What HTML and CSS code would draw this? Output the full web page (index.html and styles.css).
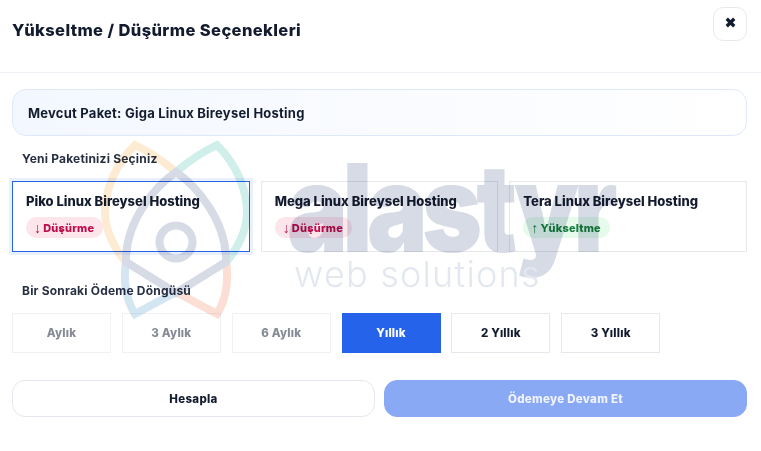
FILE: index.html
```html
<!DOCTYPE html>
<html lang="tr">
<head>
<meta charset="utf-8">
<title>Yükseltme / Düşürme Seçenekleri</title>
<link rel="stylesheet" href="styles.css">
</head>
<body>
<div class="modal">
  <header class="modal-head">
    <h1 class="modal-title">Yükseltme / Düşürme Seçenekleri</h1>
    <button class="close-btn" aria-label="Kapat">
      <svg class="close-icon" viewBox="0 0 10 10"><path d="M1.6 1.6 8.4 8.4M8.4 1.6 1.6 8.4"/></svg>
    </button>
  </header>
  <main class="modal-body">
    <div class="current">Mevcut Paket: Giga Linux Bireysel Hosting</div>
    <div class="label label-new">Yeni Paketinizi Seçiniz</div>
    <div class="plans">
      <div class="plan plan-selected">
        <div class="plan-name">Piko Linux Bireysel Hosting</div>
        <span class="pill pill-down"><span class="arrow">↓</span>Düşürme</span>
      </div>
      <div class="plan">
        <div class="plan-name">Mega Linux Bireysel Hosting</div>
        <span class="pill pill-down"><span class="arrow">↓</span>Düşürme</span>
      </div>
      <div class="plan">
        <div class="plan-name">Tera Linux Bireysel Hosting</div>
        <span class="pill pill-up"><span class="arrow">↑</span>Yükseltme</span>
      </div>
    </div>
    <div class="label label-cycle">Bir Sonraki Ödeme Döngüsü</div>
    <div class="cycles">
      <div class="cycle cycle-off">Aylık</div>
      <div class="cycle cycle-off">3 Aylık</div>
      <div class="cycle cycle-off">6 Aylık</div>
      <div class="cycle cycle-on">Yıllık</div>
      <div class="cycle">2 Yıllık</div>
      <div class="cycle">3 Yıllık</div>
    </div>
    <div class="actions">
      <button class="action action-ghost">Hesapla</button>
      <button class="action action-primary">Ödemeye Devam Et</button>
    </div>
  </main>
  <div class="watermark" aria-hidden="true">
    <svg class="wm-logo" viewBox="0 0 160 200">
      <g class="wm-stroke">
        <path class="wm-orange" d="M86 42C72 30 60 22 45 15 25 35 15 60 15 83 15 100 25 120 36 132"/>
        <path class="wm-teal" d="M86 42C100 30 112 22 127 15 147 35 157 60 157 83 157 100 147 120 136 132"/>
        <path class="wm-blue" d="M36 132C33 150 36 170 45 184L86 162"/>
        <path class="wm-red" d="M136 132C139 150 136 170 127 184L86 162"/>
        <path class="wm-grey" d="M86 42C105 55 137 90 136 132L86 163 36 132C35 90 67 55 86 42Z"/>
        <circle class="wm-grey" cx="86" cy="112" r="16.5"/>
      </g>
    </svg>
    <div class="wm-brand">alastyr</div>
    <div class="wm-sub">web solutions</div>
  </div>
</div>
</body>
</html>
```
FILE: styles.css
```css
* { box-sizing: border-box; }
html, body { margin: 0; padding: 0; background: #fff; }
body { font-family: Inter, "Noto Sans", sans-serif; color: #131b2e; }
button { font-family: inherit; }

.modal { position: relative; width: 761px; height: 451px; overflow: hidden; background: #fff; }

.modal-head {
  height: 73px;
  padding: 7px 14px 0 12px;
  display: flex;
  justify-content: space-between;
  align-items: flex-start;
  border-bottom: 1px solid #eef0f5;
}
.modal-title { margin: 12px 0 0; font-size: 16.5px; line-height: 22px; font-weight: 800; letter-spacing: .4px; }
.close-btn {
  width: 34px; height: 34px; padding: 0;
  display: flex; align-items: center; justify-content: center;
  background: #fff; border: 1px solid #e7e9ee; border-radius: 10px;
}
.close-icon { width: 11px; height: 11px; margin-top: -4px; fill: none; stroke: #131b2e; stroke-width: 3; }

.modal-body { padding: 16px 14px 0 12px; }

.current {
  height: 47px;
  padding: 0 15px;
  display: flex; align-items: center;
  font-size: 13px; font-weight: 700; letter-spacing: .23px;
  border: 1px solid #dfe8fb; border-radius: 14px;
  background: linear-gradient(90deg, #f3f7ff, #ffffff);
}

.label { padding-left: 10px; font-size: 12px; line-height: 16px; font-weight: 700; color: #273042; letter-spacing: .2px; }
.label-new { margin-top: 15px; }
.label-cycle { margin-top: 31px; }

.plans { margin-top: 14px; display: grid; grid-template-columns: repeat(3, 1fr); gap: 11px; }
.plan { height: 71px; padding: 10px 13px 0; border: 1px solid #e6e8ee; background: #fff; }
.plan-selected { border-color: #2563eb; box-shadow: 0 0 0 3px #ebf0fd; }
.plan-name { font-size: 13px; line-height: 18px; font-weight: 800; letter-spacing: 0; }
.pill {
  display: inline-flex; align-items: center;
  height: 21px; margin-top: 7px; padding: 0 9px 0 8px;
  border-radius: 11px;
  font-size: 11px; font-weight: 800; letter-spacing: .2px;
}
.arrow { font-family: "Liberation Sans", sans-serif; font-size: 14px; font-weight: 400; margin-right: 2px; }
.pill-down { background: #fde5ec; color: #be0b4a; }
.pill-up { background: #e6fbec; color: #15803d; }

.cycles { margin-top: 14px; display: flex; gap: 10.85px; }
.cycle {
  width: 99px; height: 40px;
  display: flex; align-items: center; justify-content: center;
  font-size: 11.5px; font-weight: 800; letter-spacing: .2px;
  border: 1px solid #e6e8ee; background: #fff;
}
.cycle-off { color: #878b96; border-color: #f0f1f5; }
.cycle-on { color: #fff; background: #2563eb; border-color: #2563eb; }

.actions { margin-top: 27px; display: flex; gap: 9px; }
.action {
  flex: 1; height: 37px; padding: 0;
  font-size: 11.5px; font-weight: 800; letter-spacing: .3px;
  border-radius: 13px;
}
.action-ghost { background: #fff; border: 1px solid #e5e7ee; color: #131b2e; }
.action-primary { background: #8aa9f4; border: 1px solid #8aa9f4; color: #eef3fe; }

.watermark { position: absolute; inset: 0; pointer-events: none; mix-blend-mode: multiply; }
.wm-logo { position: absolute; left: 90px; top: 130px; width: 160px; height: 200px; }
.wm-stroke { fill: none; stroke-width: 8; }
.wm-orange { stroke: #fdebd3; }
.wm-teal { stroke: #d0eeea; }
.wm-blue { stroke: #d5e6f3; }
.wm-red { stroke: #fbdfd5; }
.wm-grey { stroke: #d6dbe5; }
.wm-brand {
  position: absolute; left: 287px; top: 134px;
  font-family: Inter, sans-serif; font-size: 122px; line-height: 148px; font-weight: 900; letter-spacing: -7px;
  color: #d6dbe5;
  transform: scaleX(.84);
  transform-origin: left center;
}
.wm-sub {
  position: absolute; left: 294px; top: 252px;
  font-family: Inter, sans-serif; font-size: 36px; line-height: 44px; font-weight: 300; letter-spacing: 1.2px;
  color: #e3e8f0;
}
```
